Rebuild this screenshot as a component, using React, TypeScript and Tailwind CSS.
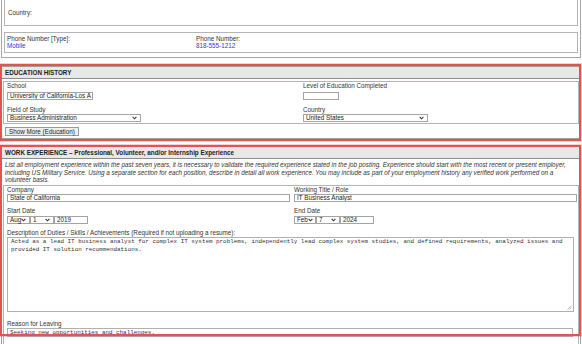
import React from "react";

const Chevron = () => (
  <svg width="5" height="4" viewBox="0 0 5 4" className="shrink-0">
    <path d="M0.6 0.8 L2.5 2.8 L4.4 0.8" fill="none" stroke="#333" strokeWidth="1.1" />
  </svg>
);

const Label = ({ children }: { children: React.ReactNode }) => (
  <div className="h-[7px] leading-[7px] whitespace-nowrap text-[#333]">{children}</div>
);

const TextBox = ({ value, className }: { value?: string; className: string }) => (
  <div
    className={`h-[8px] border border-[#a4a4a4] bg-white px-[2px] leading-[6px] whitespace-nowrap overflow-hidden text-[#222] ${className}`}
  >
    {value}
  </div>
);

const Select = ({ value, className }: { value: string; className: string }) => (
  <div
    className={`flex h-[8px] items-center justify-between border border-[#a4a4a4] bg-white pl-[2px] pr-[3px] leading-[6px] whitespace-nowrap text-[#222] ${className}`}
  >
    <span>{value}</span>
    <Chevron />
  </div>
);

const Highlight = ({ className }: { className: string }) => (
  <div
    className={`pointer-events-none absolute border-2 border-[#e25454] shadow-[0_0_0_1px_rgba(230,100,100,0.3)] ${className}`}
  />
);

export default function App() {
  return (
    <div className="relative h-[344px] w-[582px] overflow-hidden bg-white font-['Liberation_Sans',Arial,sans-serif] text-[6.3px] leading-[7px] text-[#333]">
      {/* contact card, continued from above */}
      <div className="mx-[1px] h-[58px] border-x border-b border-[#a6a6a6] px-[2px]">
        <div className="h-[26px] border-x border-b border-[#b4b4b4] pl-[3px] pt-[9px]">
          <Label>Country:</Label>
        </div>
        <div className="mt-[6px] flex h-[21px] border border-[#b4b4b4] pl-[2px] pt-[2px]">
          <div className="w-[189px]">
            <Label>Phone Number [Type]:</Label>
            <div className="leading-[7px] text-[#3333ee]">Mobile</div>
          </div>
          <div>
            <Label>Phone Number:</Label>
            <div className="leading-[7px] text-[#3333ee]">818-555-1212</div>
          </div>
        </div>
      </div>

      {/* education */}
      <div className="relative mt-[8px]">
        <div className="mx-[1px] border border-[#9e9e9e]">
          <div className="h-[12px] border-b border-[#8c8c8c] bg-[#e8e8e8] px-[3px] font-bold leading-[11px] text-[#222]">
            EDUCATION HISTORY
          </div>
          <div className="mx-[1px] mt-[2px] grid grid-cols-[296px_1fr] border border-[#b4b4b4] px-[3px] pb-[1px]">
            <div>
              <Label>School</Label>
              <TextBox value="University of California-Los A" className="mt-[3px] w-[86px]" />
              <div className="mt-[6px]">
                <Label>Field of Study</Label>
              </div>
              <Select value="Business Administration" className="mt-[1px] w-[134px]" />
            </div>
            <div>
              <Label>Level of Education Completed</Label>
              <TextBox className="mt-[3px] w-[36px]" />
              <div className="mt-[6px]">
                <Label>Country</Label>
              </div>
              <Select value="United States" className="mt-[1px] w-[125px]" />
            </div>
          </div>
          <button className="mb-[2px] ml-[3px] mt-[3px] block h-[9px] border border-[#9a9a9a] bg-[#efefef] px-[3px] leading-[7px] text-[#222]">
            Show More (Education)
          </button>
        </div>
        <Highlight className="-bottom-[2px] -top-[2px] left-0 right-[1px]" />
      </div>

      {/* work experience */}
      <div className="relative mt-[7px]">
        <div className="mx-[1px] border border-[#9e9e9e]">
          <div className="h-[12px] border-b border-[#8c8c8c] bg-[#e8e8e8] px-[3px] font-bold leading-[11px] text-[#222]">
            WORK EXPERIENCE – Professional, Volunteer, and/or Internship Experience
          </div>
          <p className="px-[3px] pt-[2px] italic leading-[7.5px] text-[#333]">
            List all employment experience within the past seven years, it is necessary to validate the required
            experience stated in the job posting. Experience should start with the most recent or present employer,
            <br />
            including US Military Service. Using a separate section for each position, describe in detail all work
            experience. You may include as part of your employment history any verified work performed on a
            <br />
            volunteer basis.
          </p>
          <div className="mx-[1px] mt-[1.5px] border border-[#b4b4b4] pb-[8px] pl-[3px] pr-[1px]">
            <div className="grid grid-cols-[287px_1fr]">
              <div>
                <Label>Company</Label>
                <TextBox value="State of California" className="mt-[1px] mr-[4px]" />
                <div className="mt-[5px]">
                  <Label>Start Date</Label>
                </div>
                <div className="mt-[1.5px] flex">
                  <Select value="Aug" className="w-[23px]" />
                  <Select value="1" className="w-[24px]" />
                  <TextBox value="2019" className="w-[34px]" />
                </div>
              </div>
              <div>
                <Label>Working Title / Role</Label>
                <TextBox value="IT Business Analyst" className="mt-[1px]" />
                <div className="mt-[5px]">
                  <Label>End Date</Label>
                </div>
                <div className="mt-[1.5px] flex">
                  <Select value="Feb" className="w-[22px]" />
                  <Select value="7" className="w-[24px]" />
                  <TextBox value="2024" className="w-[34px]" />
                </div>
              </div>
            </div>
            <div className="mt-[5.5px]">
              <Label>Description of Duties / Skills / Achievements (Required if not uploading a resume):</Label>
            </div>
            <div className="relative mr-[3px] mt-[0.5px] h-[75px] border border-[#b0b0b0] pl-[3px] font-['Liberation_Mono','Courier_New',monospace] text-[5.9px] leading-[8px] text-[#333]">
              Acted as a lead IT business analyst for complex IT system problems, independently lead complex system
              studies, and defined requirements, analyzed issues and
              <br />
              provided IT solution recommendations.
              <svg width="5" height="5" viewBox="0 0 5 5" className="absolute bottom-[1px] right-[1px]">
                <path d="M4.5 0.5 L0.5 4.5 M4.5 2.5 L2.5 4.5" stroke="#a8a8a8" strokeWidth="0.8" />
              </svg>
            </div>
            <div className="mt-[8px]">
              <Label>Reason for Leaving</Label>
            </div>
            <div className="mr-[4px] mt-[1.5px] h-[9px] border border-[#b0b0b0] pl-[2px] font-['Liberation_Mono','Courier_New',monospace] text-[5.9px] leading-[7px] text-[#333]">
              Seeking new opportunities and challenges.
            </div>
          </div>
        </div>
        <Highlight className="-top-[1px] left-0 right-[1px] h-[191px]" />
      </div>
    </div>
  );
}
